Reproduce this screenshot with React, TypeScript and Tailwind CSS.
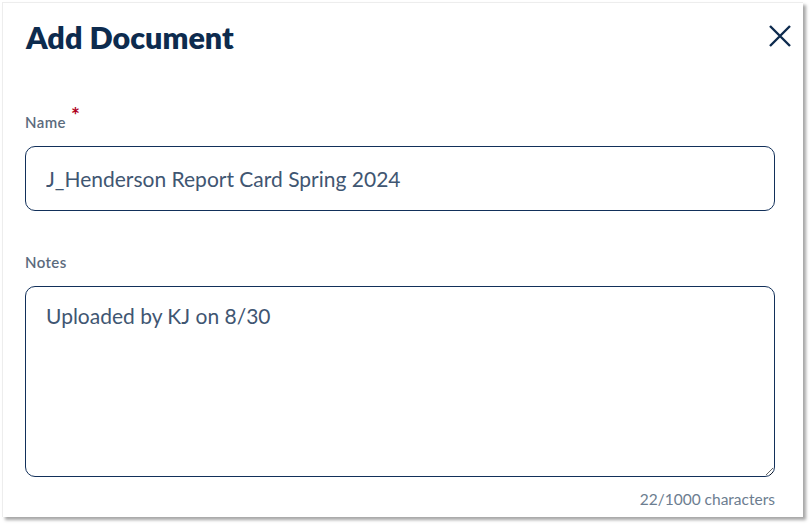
const labelClass =
  "text-[15px] tracking-[0.4px] font-semibold text-[#5b6b7d] font-['Lato',sans-serif] leading-none"
const fieldClass =
  "w-full rounded-[10px] border border-[#12305a] bg-white px-5 text-[21px] text-[#3f5672] font-['Lato',sans-serif] outline-none"

function CloseIcon() {
  return (
    <svg width="22" height="22" viewBox="0 0 22 22" fill="none" stroke="#0d2b4e" strokeWidth="2.4">
      <path d="M1 1L21 21M21 1L1 21" />
    </svg>
  )
}

function App() {
  return (
    <div className="h-[527px] w-[812px] bg-white">
      <div className="ml-[2px] mt-[2px] h-[515px] w-[801px] border-l border-t border-[#ededed] bg-white shadow-[3px_3px_3px_rgba(0,0,0,0.35)]">
        <div className="flex items-start justify-between pl-[23px] pr-[12px] pt-[16px]">
          <h1 className="text-[30.5px] font-extrabold leading-[36px] text-[#0d2b4e] font-['Lato',sans-serif]">
            Add Document
          </h1>
          <button type="button" className="mt-[6px]">
            <CloseIcon />
          </button>
        </div>

        <div className="pl-[22px] pr-[28px] pt-[54px]">
          <label className={labelClass}>
            Name
            <span className="relative -top-[5px] ml-[5px] text-[21px] font-bold text-[#b0001e]">*</span>
          </label>
          <input
            className={`${fieldClass} mt-[12px] h-[65px]`}
            defaultValue="J_Henderson Report Card Spring 2024"
          />

          <div className="mt-[39px]">
            <label className={labelClass}>Notes</label>
          </div>
          <textarea
            className={`${fieldClass} mt-[12px] block h-[191px] resize-y py-[13px]`}
            defaultValue="Uploaded by KJ on 8/30"
          />
          <p className="mt-[15px] text-right text-[15.5px] leading-none text-[#6c7d90] font-['Lato',sans-serif]">
            22/1000 characters
          </p>
        </div>
      </div>
    </div>
  )
}

export default App
